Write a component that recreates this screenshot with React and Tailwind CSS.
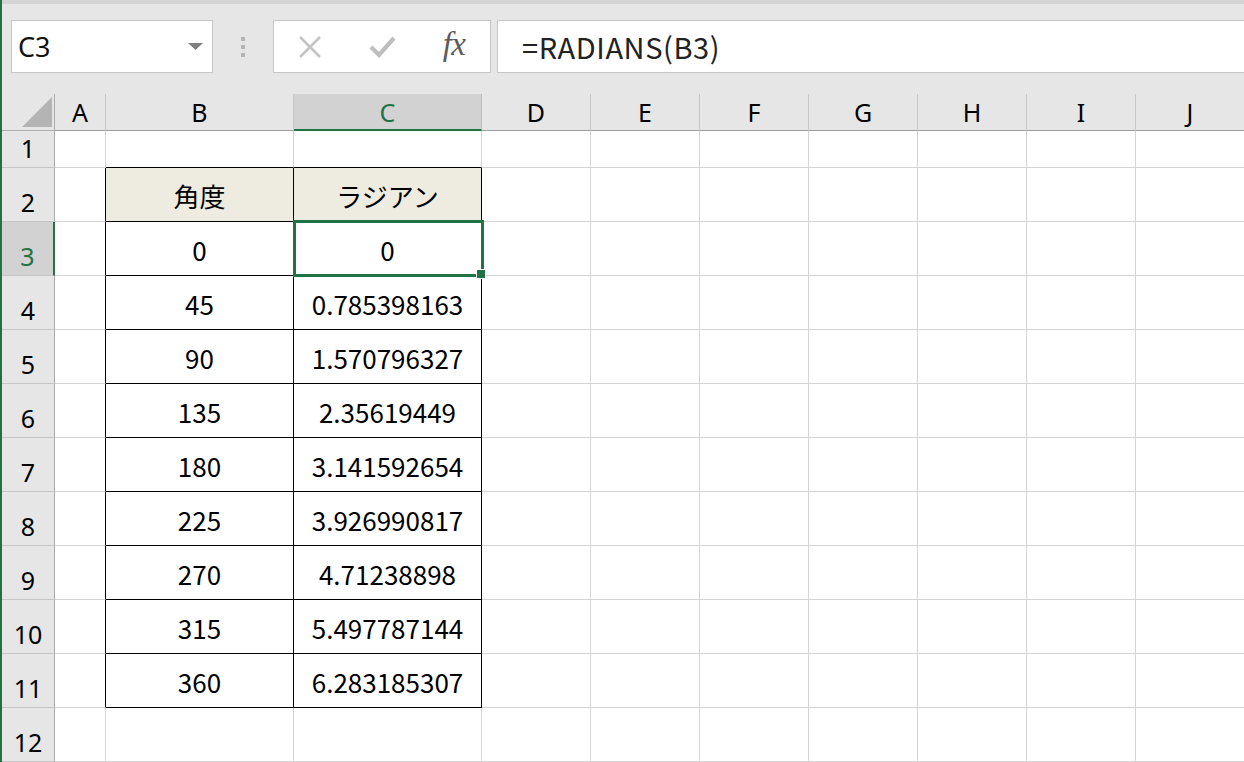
import React from 'react';

const colNames = ['', 'A', 'B', 'C', 'D', 'E', 'F', 'G', 'H', 'I', 'J'];

const data = {
  2: ['角度', 'ラジアン'],
  3: ['0', '0'],
  4: ['45', '0.785398163'],
  5: ['90', '1.570796327'],
  6: ['135', '2.35619449'],
  7: ['180', '3.141592654'],
  8: ['225', '3.926990817'],
  9: ['270', '4.71238898'],
  10: ['315', '5.497787144'],
  11: ['360', '6.283185307'],
};

const rows = [1, 2, 3, 4, 5, 6, 7, 8, 9, 10, 11, 12];

const font = { fontFamily: '"Noto Sans CJK JP", "Noto Sans", sans-serif' };

function Toolbar() {
  return (
    <div className="h-[94px] bg-[#e6e6e6] border-t-4 border-[#d4d4d4] pt-[16px] flex items-start">
      {/* name box */}
      <div className="ml-[9px] w-[202px] h-[53px] bg-white border border-[#c6c6c6] flex items-center justify-between pl-[6px] pr-[9px]">
        <span className="text-[27px] text-[#111] leading-none" style={{ fontFamily: '"Noto Sans", sans-serif' }}>C3</span>
        <svg width="15" height="8" viewBox="0 0 15 8"><polygon points="0,0 15,0 7.5,7" fill="#808080" /></svg>
      </div>
      <div className="w-[60px] h-[53px] flex flex-col items-center justify-center gap-[4px]">
        <span className="w-[4px] h-[4px] bg-[#b4b4b4]" />
        <span className="w-[4px] h-[4px] bg-[#b4b4b4]" />
        <span className="w-[4px] h-[4px] bg-[#b4b4b4]" />
      </div>
      {/* cancel / enter / fx */}
      <div className="w-[218px] h-[53px] bg-white border border-[#c6c6c6] flex items-center">
        <span className="w-[72px] flex justify-center">
          <svg width="24" height="22" viewBox="0 0 24 22">
            <path d="M2 1 L22 21 M22 1 L2 21" stroke="#c4c4c4" strokeWidth="2.6" />
          </svg>
        </span>
        <span className="w-[72px] flex justify-center">
          <svg width="27" height="22" viewBox="0 0 27 22">
            <path d="M2 11 L10 19 L25 2" stroke="#bebebe" strokeWidth="4.2" fill="none" />
          </svg>
        </span>
        <span className="w-[72px] flex justify-center">
          <span className="text-[33px] italic text-[#5a5a5a] leading-none -mt-[4px] tracking-[-0.02em]" style={{ fontFamily: '"Liberation Serif", serif' }}>fx</span>
        </span>
      </div>
      {/* formula input */}
      <div className="ml-[6px] flex-1 -mr-[2px] h-[53px] bg-white border border-[#c6c6c6] flex items-center pl-[24px]">
        <span className="text-[29px] text-[#222] leading-none tracking-[0.02em]" style={font}>=RADIANS(B3)</span>
      </div>
    </div>
  );
}

function Sheet() {
  return (
    <div className="grid grid-cols-[53px_51px_188px_188px_109px_109px_109px_109px_109px_109px_109px] grid-rows-[37px_37px_54px_54px_54px_54px_54px_54px_54px_54px_54px_54px_54px]" style={font}>
      {/* header row */}
      {colNames.map((c, i) => {
        if (i === 0) {
          return (
            <div key="corner" className="bg-[#e6e6e6] border-r border-b border-[#ababab] flex items-end justify-end pr-[2px] pb-[3px]">
              <svg width="30" height="30" viewBox="0 0 30 30"><polygon points="30,0 30,30 0,30" fill="#b4b4b4" /></svg>
            </div>
          );
        }
        const sel = c === 'C';
        return (
          <div
            key={c}
            className={
              sel
                ? 'bg-[#d2d2d2] border-r border-[#bdbdbd] border-b-2 border-b-[#217346] flex items-center justify-center text-[25px] text-[#217346]'
                : 'bg-[#e6e6e6] border-r border-[#c8c8c8] border-b border-b-[#9e9e9e] flex items-center justify-center text-[25px] text-black'
            }
            style={{ fontFamily: '"Noto Sans", sans-serif' }}
          >
            <span className="leading-none pt-[1px]">{c}</span>
          </div>
        );
      })}
      {rows.map((r) => (
        <React.Fragment key={r}>
          <div
            className={
              r === 3
                ? 'bg-[#d2d2d2] border-r-2 border-[#217346] border-b border-b-[#c6c6c6] flex items-end justify-center pb-[6px] text-[25px] text-[#217346]'
                : 'bg-[#e6e6e6] border-r border-[#ababab] border-b border-b-[#c6c6c6] flex items-end justify-center pb-[6px] text-[25px] text-black'
            }
            style={{ fontFamily: '"Noto Sans", sans-serif' }}
          >
            <span className="leading-none">{r}</span>
          </div>
          {colNames.slice(1).map((c) => {
            const inTable = (c === 'B' || c === 'C') && data[r];
            const aboveTable = (c === 'B' || c === 'C') && r === 1;
            const leftOfTable = c === 'A' && data[r];
            let cls = 'border-r border-b border-[#d4d4d4] bg-white';
            if (inTable) cls = 'border-r border-b border-black flex items-center justify-center text-[26px] text-black ' + (r === 2 ? 'bg-[#eeece1]' : 'bg-white');
            else if (aboveTable) cls = 'border-r border-[#d4d4d4] border-b border-b-black bg-white';
            else if (leftOfTable) cls = 'border-r border-black border-b border-b-[#d4d4d4] bg-white';
            const selected = c === 'C' && r === 3;
            return (
              <div key={c} className={cls + (selected ? ' relative' : '')}>
                {inTable && <span className="leading-none pt-[2px]">{c === 'B' ? data[r][0] : data[r][1]}</span>}
                {selected && (
                  <div className="absolute -left-[1px] -top-[2px] w-[191px] h-[57px] border-[3px] border-[#217346] z-10 pointer-events-none">
                    <div className="absolute -right-[5px] -bottom-[5px] w-[10px] h-[10px] bg-[#217346] border border-white" />
                  </div>
                )}
              </div>
            );
          })}
        </React.Fragment>
      ))}
    </div>
  );
}

export default function App() {
  return (
    <div className="w-[1244px] h-[762px] overflow-hidden flex bg-white">
      <div className="w-[2px] h-full bg-[#217346] shrink-0" />
      <div className="flex-1 flex flex-col">
        <Toolbar />
        <Sheet />
      </div>
    </div>
  );
}
